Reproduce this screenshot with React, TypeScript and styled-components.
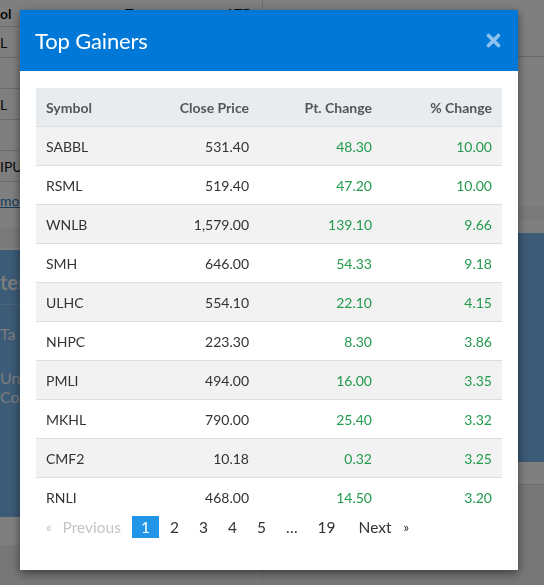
import React from 'react'
import styled, { createGlobalStyle } from 'styled-components'

const GlobalStyle = createGlobalStyle`
  html, body {
    margin: 0;
    padding: 0;
    background: #eeeeee;
    font-family: Lato, 'Noto Sans', sans-serif;
    overflow: hidden;
  }
`

interface Gainer {
  symbol: string
  close: string
  pt: string
  pct: string
}

const gainers: Gainer[] = [
  { symbol: 'SABBL', close: '531.40', pt: '48.30', pct: '10.00' },
  { symbol: 'RSML', close: '519.40', pt: '47.20', pct: '10.00' },
  { symbol: 'WNLB', close: '1,579.00', pt: '139.10', pct: '9.66' },
  { symbol: 'SMH', close: '646.00', pt: '54.33', pct: '9.18' },
  { symbol: 'ULHC', close: '554.10', pt: '22.10', pct: '4.15' },
  { symbol: 'NHPC', close: '223.30', pt: '8.30', pct: '3.86' },
  { symbol: 'PMLI', close: '494.00', pt: '16.00', pct: '3.35' },
  { symbol: 'MKHL', close: '790.00', pt: '25.40', pct: '3.32' },
  { symbol: 'CMF2', close: '10.18', pt: '0.32', pct: '3.25' },
  { symbol: 'RNLI', close: '468.00', pt: '14.50', pct: '3.20' },
]

/* ---------- page behind the modal ---------- */

const Page = styled.div`
  display: grid;
  grid-template-columns: 262px 1fr;
  height: 585px;
  color: #111;
`

const Column = styled.div`
  display: flex;
  flex-direction: column;
`

const SideColumn = styled(Column)`
  border-left: 1px solid #dcdcdc;
`

const BgTable = styled.div`
  background: #fff;
  display: flex;
  flex-direction: column;
`

const BgRow = styled.div<{ $head?: boolean }>`
  height: ${(p) => (p.$head ? 26 : 30)}px;
  border-bottom: 1px solid #d8d8d8;
  display: grid;
  grid-template-columns: 125px 103px 1fr;
  align-items: center;
  font-size: 14px;
  font-weight: ${(p) => (p.$head ? 700 : 400)};
`

const BgCell = styled.span`
  white-space: nowrap;
`

const MoreLink = styled.div`
  height: 46px;
  box-sizing: border-box;
  background: #fff;
  padding-top: 10px;
  font-size: 14px;
  color: #337ab7;
  text-decoration: underline;
`

const Band = styled.div<{ $h: number }>`
  height: ${(p) => p.$h}px;
  background: #f4f4f4;
`

const Spacer = styled.div<{ $h: number }>`
  height: ${(p) => p.$h}px;
  background: #fff;
`

const BlueCard = styled.div<{ $h: number }>`
  height: ${(p) => p.$h}px;
  background: #78b6ee;
  color: #f4f8fc;
  display: flex;
  flex-direction: column;
`

const CardTitle = styled.div`
  font-size: 20px;
  font-weight: 700;
  padding: 20px 0 10px;
  border-bottom: 1px solid #9cc8f0;
`

const CardLine = styled.div<{ $gap: number }>`
  font-size: 16px;
  padding-top: ${(p) => p.$gap}px;
  line-height: 19px;
`

const SideBox = styled.div`
  background: #fff;
  height: 207px;
  display: flex;
  flex-direction: column;
`

const SideHead = styled.div`
  height: 56px;
  border-bottom: 1px solid #d0d0d0;
`

const SideFoot = styled.div`
  height: 22px;
  background: #fff;
  border-bottom: 1px solid #dcdcdc;
`

/* ---------- modal ---------- */

const Overlay = styled.div`
  position: fixed;
  inset: 0;
  background: rgba(0, 0, 0, 0.5);
  padding: 10px 0 0 20px;
`

const Modal = styled.div`
  width: 498px;
  background: #fff;
  box-shadow: 0 3px 9px rgba(0, 0, 0, 0.5);
`

const ModalHeader = styled.div`
  height: 61px;
  background: #0078d7;
  display: flex;
  align-items: center;
  justify-content: space-between;
  padding: 0 17px 0 15px;
  box-sizing: border-box;
`

const ModalTitle = styled.h4`
  margin: 0;
  font-size: 22px;
  font-weight: 400;
  color: #fff;
  letter-spacing: -0.15px;
`

const CloseButton = styled.button`
  border: 0;
  padding: 0;
  background: none;
  display: flex;
  opacity: 0.55;
  cursor: pointer;
`

const ModalBody = styled.div`
  padding: 17px 16px 16px;
`

const Table = styled.table`
  width: 100%;
  table-layout: fixed;
  border-collapse: collapse;
  font-size: 14px;
  color: #333;
`

const Th = styled.th<{ $left?: boolean; $w: number }>`
  width: ${(p) => p.$w}px;
  height: 38px;
  padding: 0 10px;
  text-align: ${(p) => (p.$left ? 'left' : 'right')};
  font-weight: 700;
  color: #555;
  background: #e9ecef;
  border-bottom: 1px solid #dddddd;
`

const Tr = styled.tr`
  &:nth-child(odd) {
    background: #f2f2f2;
  }
  &:not(:last-child) td {
    border-bottom: 1px solid #dddddd;
  }
`

const Td = styled.td<{ $left?: boolean; $up?: boolean }>`
  height: 38px;
  padding: 0 10px;
  text-align: ${(p) => (p.$left ? 'left' : 'right')};
  color: ${(p) => (p.$up ? '#239a4e' : '#333')};
`

const Pager = styled.ul`
  list-style: none;
  margin: 0 0 16px;
  padding: 0;
  display: flex;
  gap: 2px;
  font-size: 15.5px;
`

const PageItem = styled.li<{ $active?: boolean; $disabled?: boolean }>`
  height: 22px;
  line-height: 22px;
  padding: 0 9px;
  display: flex;
  align-items: center;
  background: ${(p) => (p.$active ? '#2196e8' : 'transparent')};
  color: ${(p) => (p.$active ? '#fff' : p.$disabled ? '#c4c4c4' : '#333')};
`

const EdgeItem = styled(PageItem)`
  padding-left: 10px;
`

const NextItem = styled(PageItem)`
  padding-left: 12px;
`

const Arrow = styled.span<{ $before?: boolean }>`
  font-size: 13px;
  margin: ${(p) => (p.$before ? '0 11px 0 0' : '0 0 0 12px')};
`

const CloseIcon = () => (
  <svg width='15' height='15' viewBox='0 0 15 15'>
    <path d='M2.5 2.5 L12.5 12.5 M12.5 2.5 L2.5 12.5' stroke='#fff' strokeWidth='3.6' strokeLinecap='round' />
  </svg>
)

const pages = ['2', '3', '4', '5', '…', '19']

export default function App() {
  return (
    <>
      <GlobalStyle />
      <Page>
        <Column>
          <BgTable>
            <BgRow $head>
              <BgCell>ol</BgCell>
              <BgCell>Turnover</BgCell>
              <BgCell>LTP</BgCell>
            </BgRow>
            <BgRow>
              <BgCell>L</BgCell>
            </BgRow>
            <BgRow />
            <BgRow>
              <BgCell>L</BgCell>
            </BgRow>
            <BgRow />
            <BgRow>
              <BgCell>IPU</BgCell>
            </BgRow>
          </BgTable>
          <MoreLink>more</MoreLink>
          <Band $h={20} />
          <Spacer $h={2} />
          <BlueCard $h={267}>
            <CardTitle>ter</CardTitle>
            <CardLine $gap={19}>Ta</CardLine>
            <CardLine $gap={25}>Un</CardLine>
            <CardLine $gap={0}>Co</CardLine>
          </BlueCard>
          <Spacer $h={28} />
        </Column>
        <SideColumn>
          <SideBox>
            <SideHead />
          </SideBox>
          <Band $h={13} />
          <Spacer $h={13} />
          <BlueCard $h={229} />
          <SideFoot />
        </SideColumn>
      </Page>

      <Overlay>
        <Modal>
          <ModalHeader>
            <ModalTitle>Top Gainers</ModalTitle>
            <CloseButton aria-label='Close'>
              <CloseIcon />
            </CloseButton>
          </ModalHeader>
          <ModalBody>
            <Table>
              <thead>
                <tr>
                  <Th $left $w={80}>
                    Symbol
                  </Th>
                  <Th $w={103}>Close Price</Th>
                  <Th $w={103}>Pt. Change</Th>
                  <Th $w={100}>% Change</Th>
                </tr>
              </thead>
              <tbody>
                {gainers.map((g) => (
                  <Tr key={g.symbol}>
                    <Td $left>{g.symbol}</Td>
                    <Td>{g.close}</Td>
                    <Td $up>{g.pt}</Td>
                    <Td $up>{g.pct}</Td>
                  </Tr>
                ))}
              </tbody>
            </Table>
            <Pager>
              <EdgeItem $disabled>
                <Arrow $before>«</Arrow>Previous
              </EdgeItem>
              <PageItem $active>1</PageItem>
              {pages.map((p) => (
                <PageItem key={p}>{p}</PageItem>
              ))}
              <NextItem>
                Next<Arrow>»</Arrow>
              </NextItem>
            </Pager>
          </ModalBody>
        </Modal>
      </Overlay>
    </>
  )
}
